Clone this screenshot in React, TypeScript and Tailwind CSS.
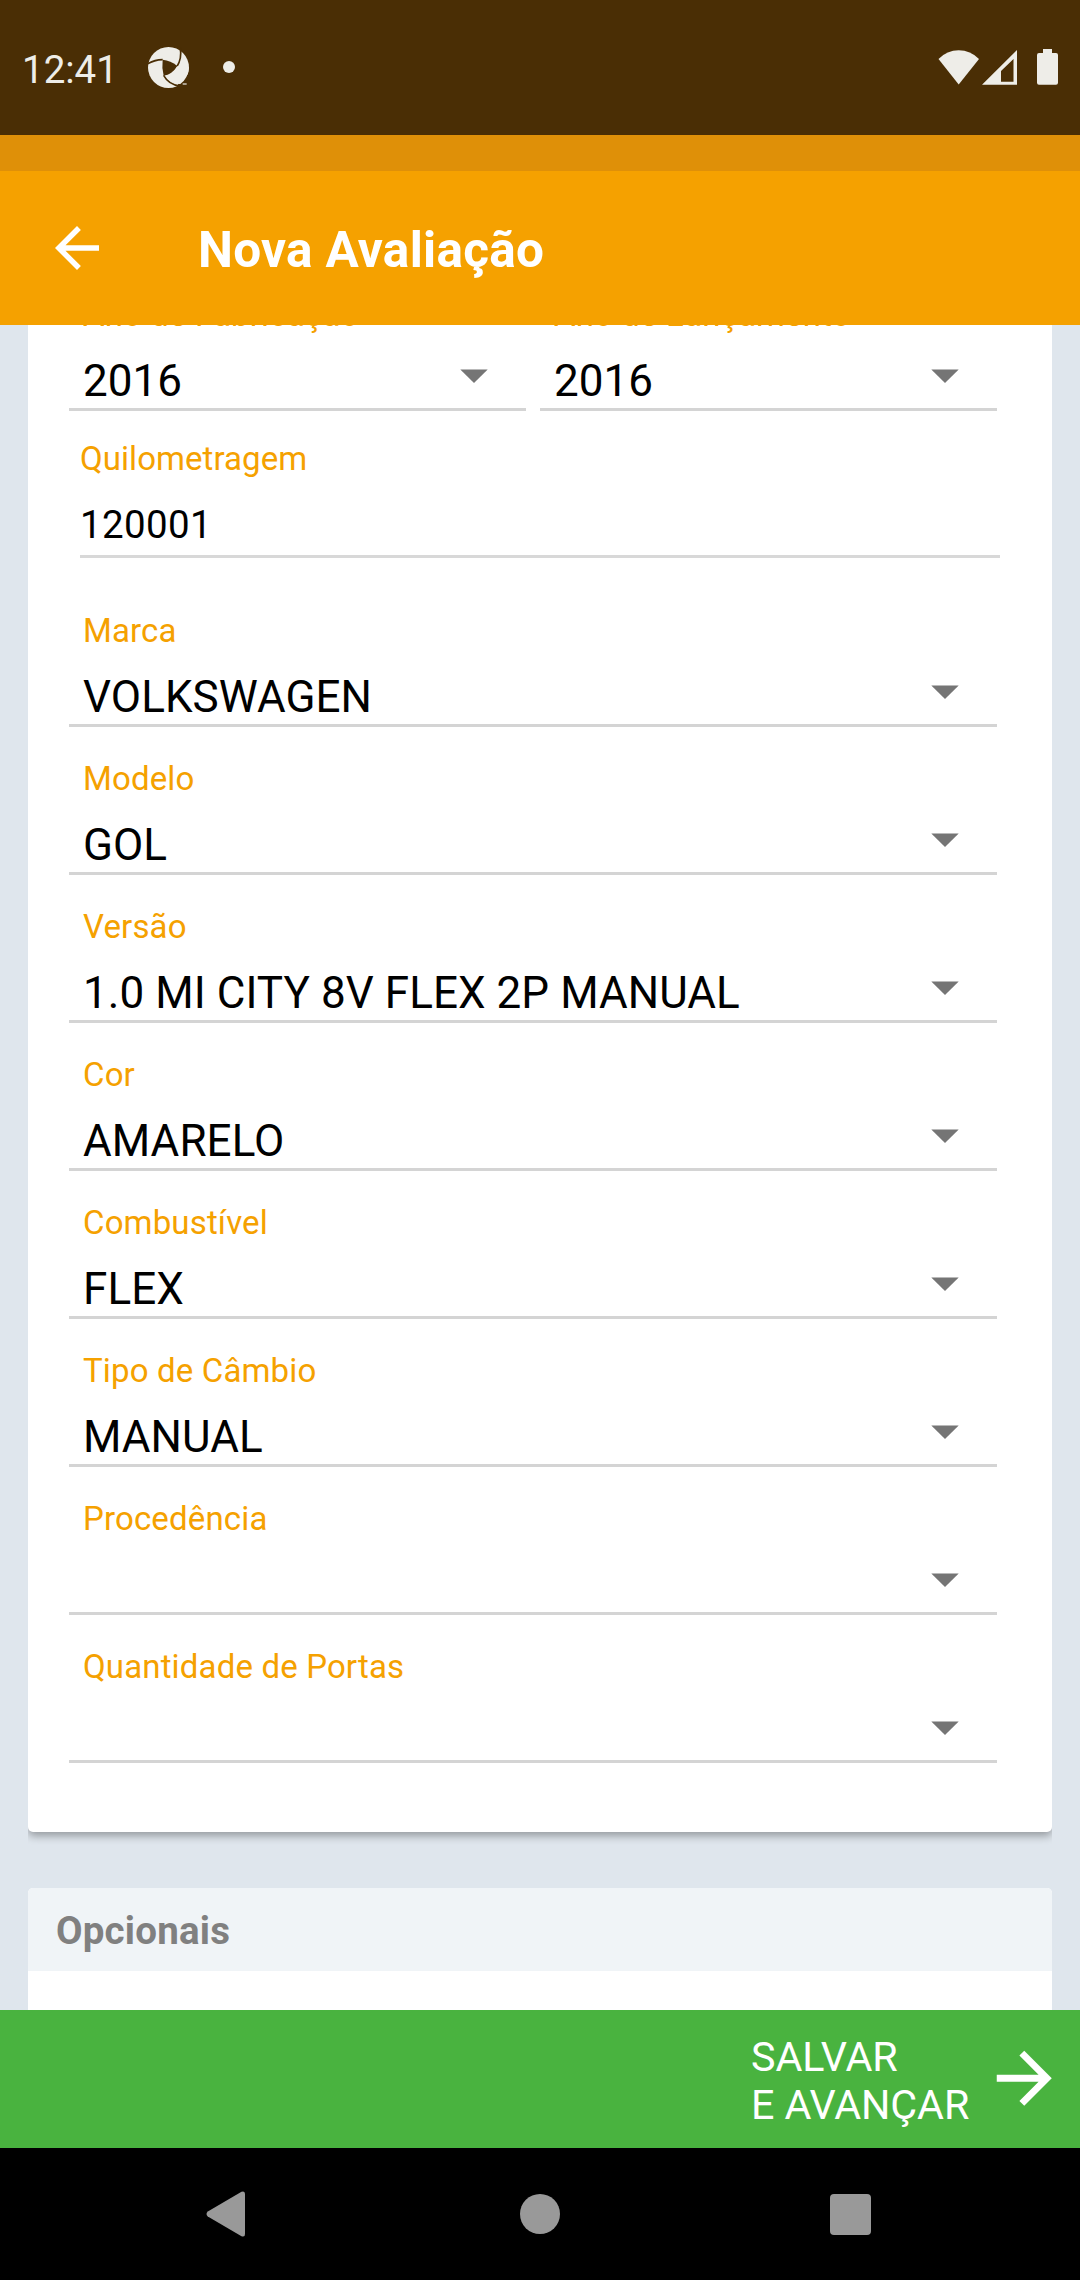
import React from "react";

function Caret() {
  return (
    <svg className="h-[14px] w-[28px] shrink-0" viewBox="0 0 28 14" fill="#757575">
      <path d="M0.3 0.4H27.7L14 14Z" />
    </svg>
  );
}

function SelectField({ label, value }: { label: string; value?: string }) {
  return (
    <div className="flex h-[148px] min-w-0 flex-1 flex-col border-b-[3px] border-[#d4d4d4] pl-[14px] pt-8">
      <span className="whitespace-nowrap text-[33px] leading-[39px] tracking-[0.15px] text-[#f5a100]">{label}</span>
      <div className="mt-[21px] flex h-[52px] items-start justify-between pr-[38px]">
        <span className="whitespace-nowrap text-[44px] leading-[52px] tracking-[0.06px] text-black">{value}</span>
        <div className="pt-[14px]">
          <Caret />
        </div>
      </div>
    </div>
  );
}

const FIELDS = [
  { label: "Marca", value: "VOLKSWAGEN" },
  { label: "Modelo", value: "GOL" },
  { label: "Versão", value: "1.0 MI CITY 8V FLEX 2P MANUAL" },
  { label: "Cor", value: "AMARELO" },
  { label: "Combustível", value: "FLEX" },
  { label: "Tipo de Câmbio", value: "MANUAL" },
  { label: "Procedência" },
  { label: "Quantidade de Portas" },
];

function StatusBar() {
  return (
    <div className="flex h-[135px] shrink-0 items-start bg-[#4a2e05] pl-[22px] text-[#eeede8]">
      <span className="mt-[47px] w-[126px] text-[38.5px] leading-[46px]">12:41</span>
      <svg className="mt-[47px] h-[41px] w-[41px]" viewBox="444 141 123 123">
        <circle cx="505.500" cy="202.500" r="61.500" fill="#eeede8" />
        <g fill="none" stroke="#4a2e05" strokeWidth="5">
          <path d="M442 192Q462 180 488 179" />
          <path d="M541 144Q546 176 531 199" />
          <path d="M491 226Q506 254 540 258" />
        </g>
        <path d="M488 179Q512 181 532 198Q516 224 491 227Q485 202 488 179Z" fill="#4a2e05" />
        <path d="M567 220L535 252L528 264H567Z" fill="#4a2e05" />
        <path d="M567 202Q564 236 541 252Q514 253 496 228Q518 224 533 198Z" fill="#eeede8" />
        <path d="M548 249H560V255H548Z" fill="#eeede8" opacity="0.6" />
      </svg>
      <div className="ml-[34px] mt-[61px] h-3 w-3 rounded-full bg-[#eeede8]" />
      <div className="ml-auto mr-[22px] mt-[49px] flex items-end">
        <svg className="h-[36px] w-[42px]" viewBox="0 0 42 36" fill="#eeede8">
          <path d="M0.500 10Q9 1.300 20.700 1.300T41 10L20.700 35.500Z" />
        </svg>
        <svg className="ml-[2px] h-[36px] w-[35px]" viewBox="0 0 35 36" fill="#eeede8">
          <path fillRule="evenodd" d="M0 35.700L35 1V35.700ZM19 22V32.700H31.500V10Z" />
        </svg>
        <svg className="ml-5 h-[36px] w-[21px]" viewBox="0 0 21 36" fill="#eeede8">
          <path d="M6 0H15V4H19Q21 4 21 6V33.700Q21 35.700 19 35.700H2Q0 35.700 0 33.700V6Q0 4 2 4H6Z" />
        </svg>
      </div>
    </div>
  );
}

function AppBar() {
  return (
    <header className="shrink-0 bg-[#f5a100]">
      <div className="h-9 bg-[#df9008]" />
      <div className="flex h-[154px] items-start text-white">
        <svg className="ml-[44px] mt-[44px] h-[66px] w-[66px]" viewBox="0 0 24 24" fill="currentColor">
          <path d="M20 11H7.830l5.590-5.590L12 4l-8 8 8 8 1.410-1.410L7.830 13H20v-2z" />
        </svg>
        <h1 className="ml-[88px] mt-[50px] whitespace-nowrap text-[49.5px] font-bold leading-[58px] tracking-[0.3px]">
          Nova Avaliação
        </h1>
      </div>
    </header>
  );
}

export default function App() {
  return (
    <div className="flex h-[2280px] w-[1080px] flex-col overflow-hidden bg-[#dfe6ed] font-[Roboto,sans-serif]">
      <StatusBar />
      <AppBar />
      <main className="flex min-h-0 flex-1 flex-col overflow-hidden px-7">
        <section className="-mt-[62px] h-[1569px] shrink-0 rounded-[5px] bg-white pl-[41px] pr-[55px] shadow-[0_4px_8px_rgba(0,0,0,0.33)] [clip-path:inset(0_0_-20px_0)]">
          <div className="flex gap-[14px]">
            <SelectField label="Ano de Fabricação" value="2016" />
            <SelectField label="Ano de Lançamento" value="2016" />
          </div>
          <div className="-mr-[3px] ml-[11px] flex h-[168px] flex-col pt-7">
            <span className="text-[33px] leading-[39px] tracking-[0.06px] text-[#f5a100]">Quilometragem</span>
            <div className="mt-6 h-[56px] border-b-[3px] border-[#d8d8d8] text-[38.5px] leading-[46px] tracking-[0.35px] text-black">
              120001
            </div>
          </div>
          {FIELDS.map((f) => (
            <SelectField key={f.label} label={f.label} value={f.value} />
          ))}
        </section>
        <section className="mt-14 h-[300px] shrink-0 overflow-hidden rounded-[5px] bg-white">
          <h2 className="h-[83px] bg-[#f0f4f7] pl-7 pt-[20px] text-[38.5px] font-bold leading-[46px] tracking-[0.2px] text-[#808080]">
            Opcionais
          </h2>
        </section>
      </main>
      <button className="flex h-[138px] shrink-0 items-start bg-[#49b33f] pl-[751px] text-white">
        <span className="mt-[23px] w-[232px] whitespace-nowrap text-left text-[41.25px] leading-[48px] tracking-[-0.1px]">
          SALVAR
          <br />E AVANÇAR
        </span>
        <svg className="mt-[27px] h-[82.5px] w-[82.5px] shrink-0" viewBox="0 0 24 24" fill="currentColor">
          <path d="M12 4l-1.410 1.410L16.170 11H4v2h12.170l-5.580 5.590L12 20l8-8z" />
        </svg>
      </button>
      <nav className="flex h-[132px] shrink-0 items-center bg-black pl-[206px] pr-[209px]">
        <svg className="h-[46px] w-[39px]" viewBox="0 0 39 46" fill="#999">
          <path d="M35.500 0.800Q39 -0.500 39 3V43Q39 46.500 35.500 45.200L1.800 25.500Q-0.800 23 1.800 20.500Z" />
        </svg>
        <div className="ml-[275px] h-10 w-10 rounded-full bg-[#999]" />
        <div className="ml-auto h-[41px] w-[41px] rounded-[4px] bg-[#999]" />
      </nav>
    </div>
  );
}
